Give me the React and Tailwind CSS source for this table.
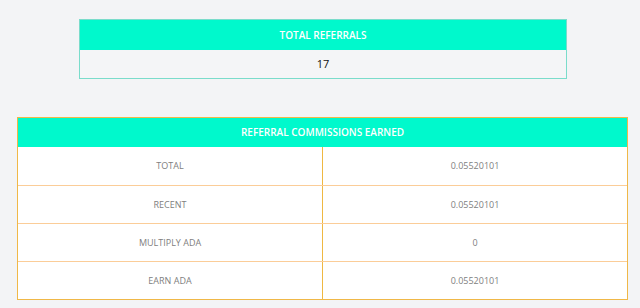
export default function App() {
  const rows = [
    ["TOTAL", "0.05520101"],
    ["RECENT", "0.05520101"],
    ["MULTIPLY ADA", "0"],
    ["EARN ADA", "0.05520101"],
  ];
  return (
    <div
      className="w-[640px] h-[308px] bg-[#f3f4f6] overflow-hidden pt-[19px]"
      style={{ fontFamily: '"Open Sans", "Liberation Sans", sans-serif' }}
    >
      <div className="ml-[79px] w-[488px] border border-[#7adccb]">
        <div className="h-[30px] bg-[#00f9cc] flex items-center justify-center text-white text-[10px] font-semibold">
          TOTAL REFERRALS
        </div>
        <div className="h-[28px] bg-[#f4f5f7] flex items-center justify-center text-[#111111] text-[11px]">
          17
        </div>
      </div>
      <div className="ml-[17px] mt-[38px] w-[611px] border border-[#f0b848] bg-white">
        <div className="h-[29px] bg-[#00f9cc] flex items-center justify-center text-white text-[10px] font-semibold">
          REFERRAL COMMISSIONS EARNED
        </div>
        {rows.map(([a, b], i) => (
          <div
            key={i}
            className={`flex h-[38px] ${i > 0 ? "border-t border-[#fbcd98]" : ""}`}
          >
            <div className="w-[305px] border-r border-[#efb842] flex items-center justify-center text-[9px] text-[#808080]">
              {a}
            </div>
            <div className="flex-1 flex items-center justify-center text-[9px] text-[#808080]">
              {b}
            </div>
          </div>
        ))}
      </div>
    </div>
  );
}
